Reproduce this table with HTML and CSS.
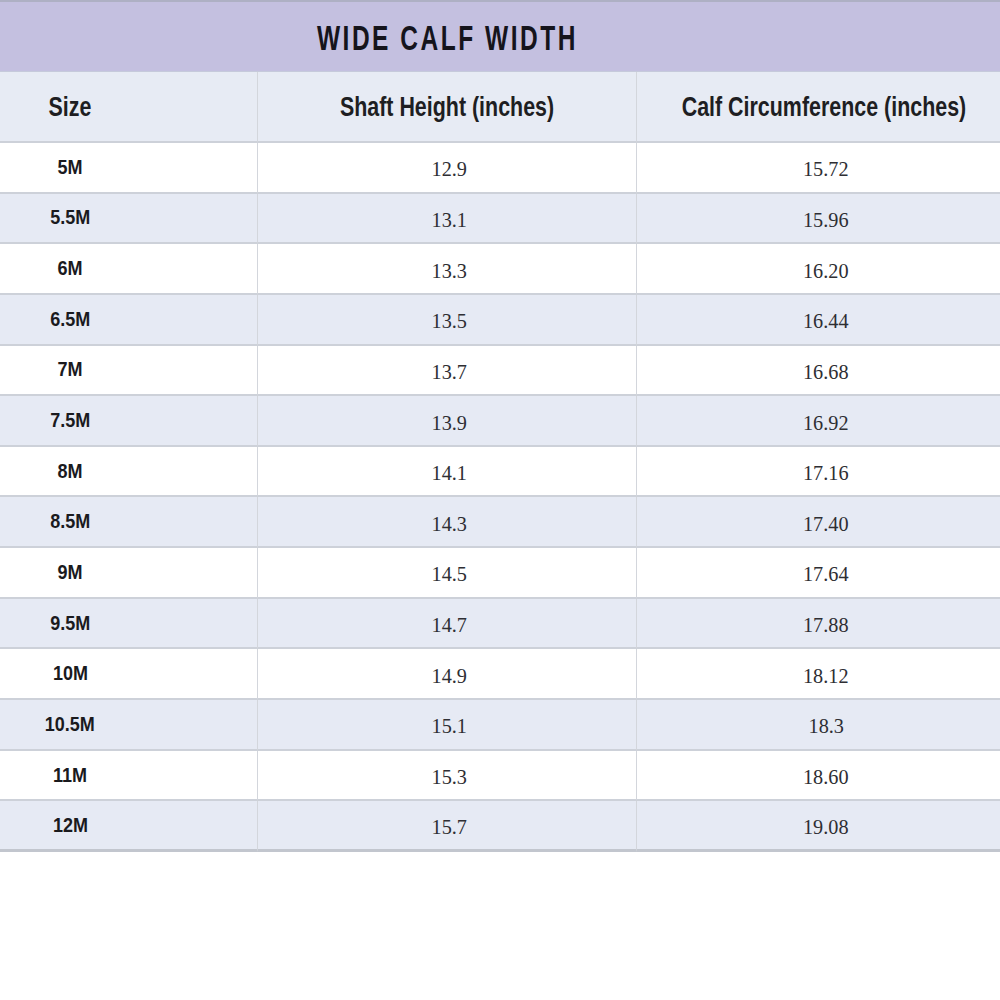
FILE: index.html
```html
<!DOCTYPE html>
<html>
<head>
<meta charset="utf-8">
<link rel="stylesheet" href="styles.css">
</head>
<body>
<div class="page">
  <div class="chart">
    <div class="title"><span class="cond title-text">WIDE CALF WIDTH</span></div>
    <div class="cell head"><span class="cond">Size</span></div>
    <div class="cell head"><span class="cond">Shaft Height (inches)</span></div>
    <div class="cell head"><span class="cond">Calf Circumference (inches)</span></div>

    <div class="cell size"><span class="cond">5M</span></div><div class="cell val"><span class="num">12.9</span></div><div class="cell val"><span class="num">15.72</span></div>
    <div class="cell size alt"><span class="cond">5.5M</span></div><div class="cell val alt"><span class="num">13.1</span></div><div class="cell val alt"><span class="num">15.96</span></div>
    <div class="cell size"><span class="cond">6M</span></div><div class="cell val"><span class="num">13.3</span></div><div class="cell val"><span class="num">16.20</span></div>
    <div class="cell size alt"><span class="cond">6.5M</span></div><div class="cell val alt"><span class="num">13.5</span></div><div class="cell val alt"><span class="num">16.44</span></div>
    <div class="cell size"><span class="cond">7M</span></div><div class="cell val"><span class="num">13.7</span></div><div class="cell val"><span class="num">16.68</span></div>
    <div class="cell size alt"><span class="cond">7.5M</span></div><div class="cell val alt"><span class="num">13.9</span></div><div class="cell val alt"><span class="num">16.92</span></div>
    <div class="cell size"><span class="cond">8M</span></div><div class="cell val"><span class="num">14.1</span></div><div class="cell val"><span class="num">17.16</span></div>
    <div class="cell size alt"><span class="cond">8.5M</span></div><div class="cell val alt"><span class="num">14.3</span></div><div class="cell val alt"><span class="num">17.40</span></div>
    <div class="cell size"><span class="cond">9M</span></div><div class="cell val"><span class="num">14.5</span></div><div class="cell val"><span class="num">17.64</span></div>
    <div class="cell size alt"><span class="cond">9.5M</span></div><div class="cell val alt"><span class="num">14.7</span></div><div class="cell val alt"><span class="num">17.88</span></div>
    <div class="cell size"><span class="cond">10M</span></div><div class="cell val"><span class="num">14.9</span></div><div class="cell val"><span class="num">18.12</span></div>
    <div class="cell size alt"><span class="cond">10.5M</span></div><div class="cell val alt"><span class="num">15.1</span></div><div class="cell val alt"><span class="num">18.3</span></div>
    <div class="cell size"><span class="cond">11M</span></div><div class="cell val"><span class="num">15.3</span></div><div class="cell val"><span class="num">18.60</span></div>
    <div class="cell size alt last"><span class="cond">12M</span></div><div class="cell val alt last"><span class="num">15.7</span></div><div class="cell val alt last"><span class="num">19.08</span></div>
  </div>
</div>
</body>
</html>
```

FILE: styles.css
```css
html, body {
  margin: 0;
  padding: 0;
  background: #ffffff;
}
.page {
  width: 1000px;
  height: 1000px;
  overflow: hidden;
}
.chart {
  display: grid;
  grid-template-columns: 375px 379px 374px;
  width: 1128px;
  margin-left: -117px;
  font-family: "Liberation Sans", Arial, sans-serif;
  color: #1b1b1f;
}
.title {
  grid-column: 1 / -1;
  height: 72px;
  box-sizing: border-box;
  border-top: 2px solid #aeb0c4;
  border-bottom: 1px solid #c6cadb;
  background: #c4c0e0;
  display: flex;
  align-items: center;
  justify-content: center;
}
.cond {
  display: inline-block;
  font-weight: bold;
  transform: scaleX(0.78);
  white-space: nowrap;
}
.title-text {
  font-size: 35px;
  letter-spacing: 3.6px;
  transform: scaleX(0.7);
  color: #15141c;
  margin-top: 2px;
}
.cell {
  box-sizing: border-box;
  display: flex;
  align-items: center;
  justify-content: center;
  border-bottom: 2px solid #cdd1d9;
  background: #ffffff;
}
.cell:nth-child(3n+2) {
  border-right: 1px solid #d3d6dc;
}
.cell:nth-child(3n+3) {
  border-right: 1px solid #d3d6dc;
}
.head {
  height: 71px;
  background: #e7ebf4;
  font-size: 28px;
  color: #1e1e22;
}
.head .cond {
  transform: scaleX(0.765);
}
.size, .val {
  height: 50.65px;
}
.size {
  font-size: 20px;
  color: #1a1a1e;
}
.size .cond {
  transform: scaleX(0.9);
}
.val {
  font-family: "Liberation Serif", "Times New Roman", serif;
  font-size: 22px;
  color: #2e2e33;
  padding-top: 4px;
  padding-left: 4px;
}
.num {
  display: inline-block;
  transform: scaleX(0.92);
}
.alt {
  background: #e6eaf4;
}
.last {
  border-bottom: 3px solid #c2c6ce;
}
```
